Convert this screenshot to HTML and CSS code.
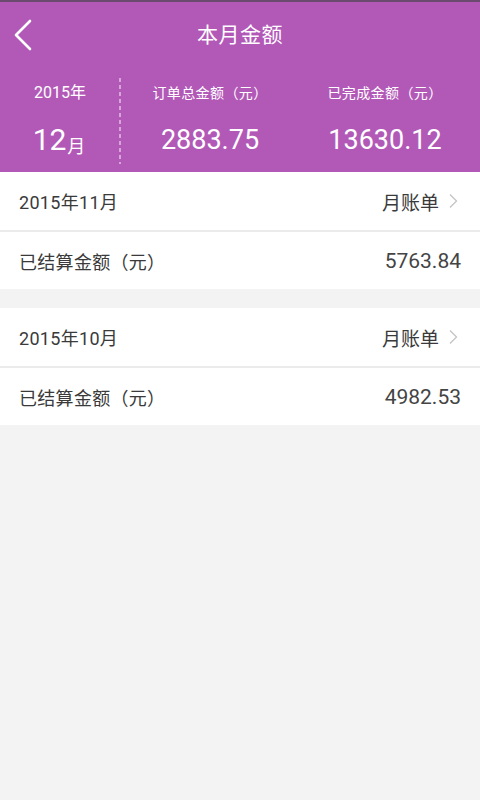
FILE: index.html
```html
<!DOCTYPE html>
<html lang="zh-CN">
<head>
<meta charset="utf-8">
<title>本月金额</title>
<link rel="stylesheet" href="styles.css">
</head>
<body>
<div class="app">
  <header class="header">
    <div class="toolbar">
      <span class="back">
        <svg width="20" height="32" viewBox="0 0 20 32"><polyline points="17,2 3,16 17,30" fill="none" stroke="#fff" stroke-width="2.6" stroke-linecap="round" stroke-linejoin="round"/></svg>
      </span>
      <h1 class="title">本月金额</h1>
    </div>
    <div class="stats">
      <div class="col col-date">
        <div class="label year">2015年</div>
        <div class="value month"><span class="mnum">12</span><span class="munit">月</span></div>
      </div>
      <div class="col">
        <div class="label">订单总金额（元）</div>
        <div class="value">2883.75</div>
      </div>
      <div class="col">
        <div class="label">已完成金额（元）</div>
        <div class="value">13630.12</div>
      </div>
    </div>
  </header>

  <section class="card">
    <div class="row">
      <span class="row-left">2015年11月</span>
      <span class="row-right">月账单<svg class="chev" width="10" height="16" viewBox="0 0 10 16"><polyline points="2,1.5 8.5,8 2,14.5" fill="none" stroke="#c4c4c4" stroke-width="1.3"/></svg></span>
    </div>
    <div class="row">
      <span class="row-left">已结算金额（元）</span>
      <span class="row-num">5763.84</span>
    </div>
  </section>

  <section class="card">
    <div class="row">
      <span class="row-left">2015年10月</span>
      <span class="row-right">月账单<svg class="chev" width="10" height="16" viewBox="0 0 10 16"><polyline points="2,1.5 8.5,8 2,14.5" fill="none" stroke="#c4c4c4" stroke-width="1.3"/></svg></span>
    </div>
    <div class="row">
      <span class="row-left">已结算金额（元）</span>
      <span class="row-num">4982.53</span>
    </div>
  </section>
</div>
</body>
</html>
```

FILE: styles.css
```css
* { box-sizing: border-box; }
html, body {
  margin: 0;
  padding: 0;
  width: 480px;
  height: 800px;
  background: #f3f3f3;
  font-family: Roboto, "Noto Sans CJK SC", sans-serif;
  overflow: hidden;
}
.app { width: 480px; }

.header {
  background: #b259b8;
  border-top: 2px solid #6b4a70;
  color: #fff;
  height: 172px;
}
.toolbar {
  height: 66px;
  display: flex;
  align-items: center;
  justify-content: center;
  position: relative;
  padding-bottom: 5px;
}
.back {
  position: absolute;
  left: 13px;
  top: 17px;
  width: 20px;
  height: 32px;
  display: flex;
}
.title {
  margin: 0;
  font-size: 21px;
  font-weight: normal;
  letter-spacing: 0.5px;
}
.stats {
  display: grid;
  grid-template-columns: 120px 180px 170px;
  height: 104px;
}
.col {
  display: flex;
  flex-direction: column;
  align-items: center;
  padding-top: 13px;
}
.col-date {
  position: relative;
}
.col-date::after {
  content: "";
  position: absolute;
  right: -1px;
  top: 10px;
  bottom: 8px;
  width: 2px;
  background: repeating-linear-gradient(to bottom, #d9a3dc 0 4px, transparent 4px 7px);
}
.label {
  font-size: 14px;
  line-height: 24px;
  height: 24px;
  letter-spacing: 0.4px;
}
.year {
  font-size: 16px;
  letter-spacing: 0;
}
.value {
  font-size: 27px;
  line-height: 32px;
  margin-top: 19px;
}
.month {
  display: flex;
  align-items: baseline;
  margin-left: -2px;
}
.mnum { font-size: 30px; }
.munit { font-size: 18px; margin-left: 1px; position: relative; top: 3px; }

.card {
  background: #fff;
  margin-bottom: 19px;
}
.row {
  height: 58px;
  display: flex;
  align-items: center;
  justify-content: space-between;
  padding: 0 19px 0 19px;
  font-size: 18px;
  color: #3a3a3a;
}
.row + .row {
  border-top: 2px solid #ebebeb;
  height: 59px;
}
.row-left { letter-spacing: 0.3px; }
.row-right {
  display: flex;
  align-items: center;
  font-size: 19px;
  color: #3a3a3a;
}
.chev {
  margin-left: 9px;
  margin-right: 3px;
}
.row-num {
  font-size: 21px;
  color: #444;
}
```
